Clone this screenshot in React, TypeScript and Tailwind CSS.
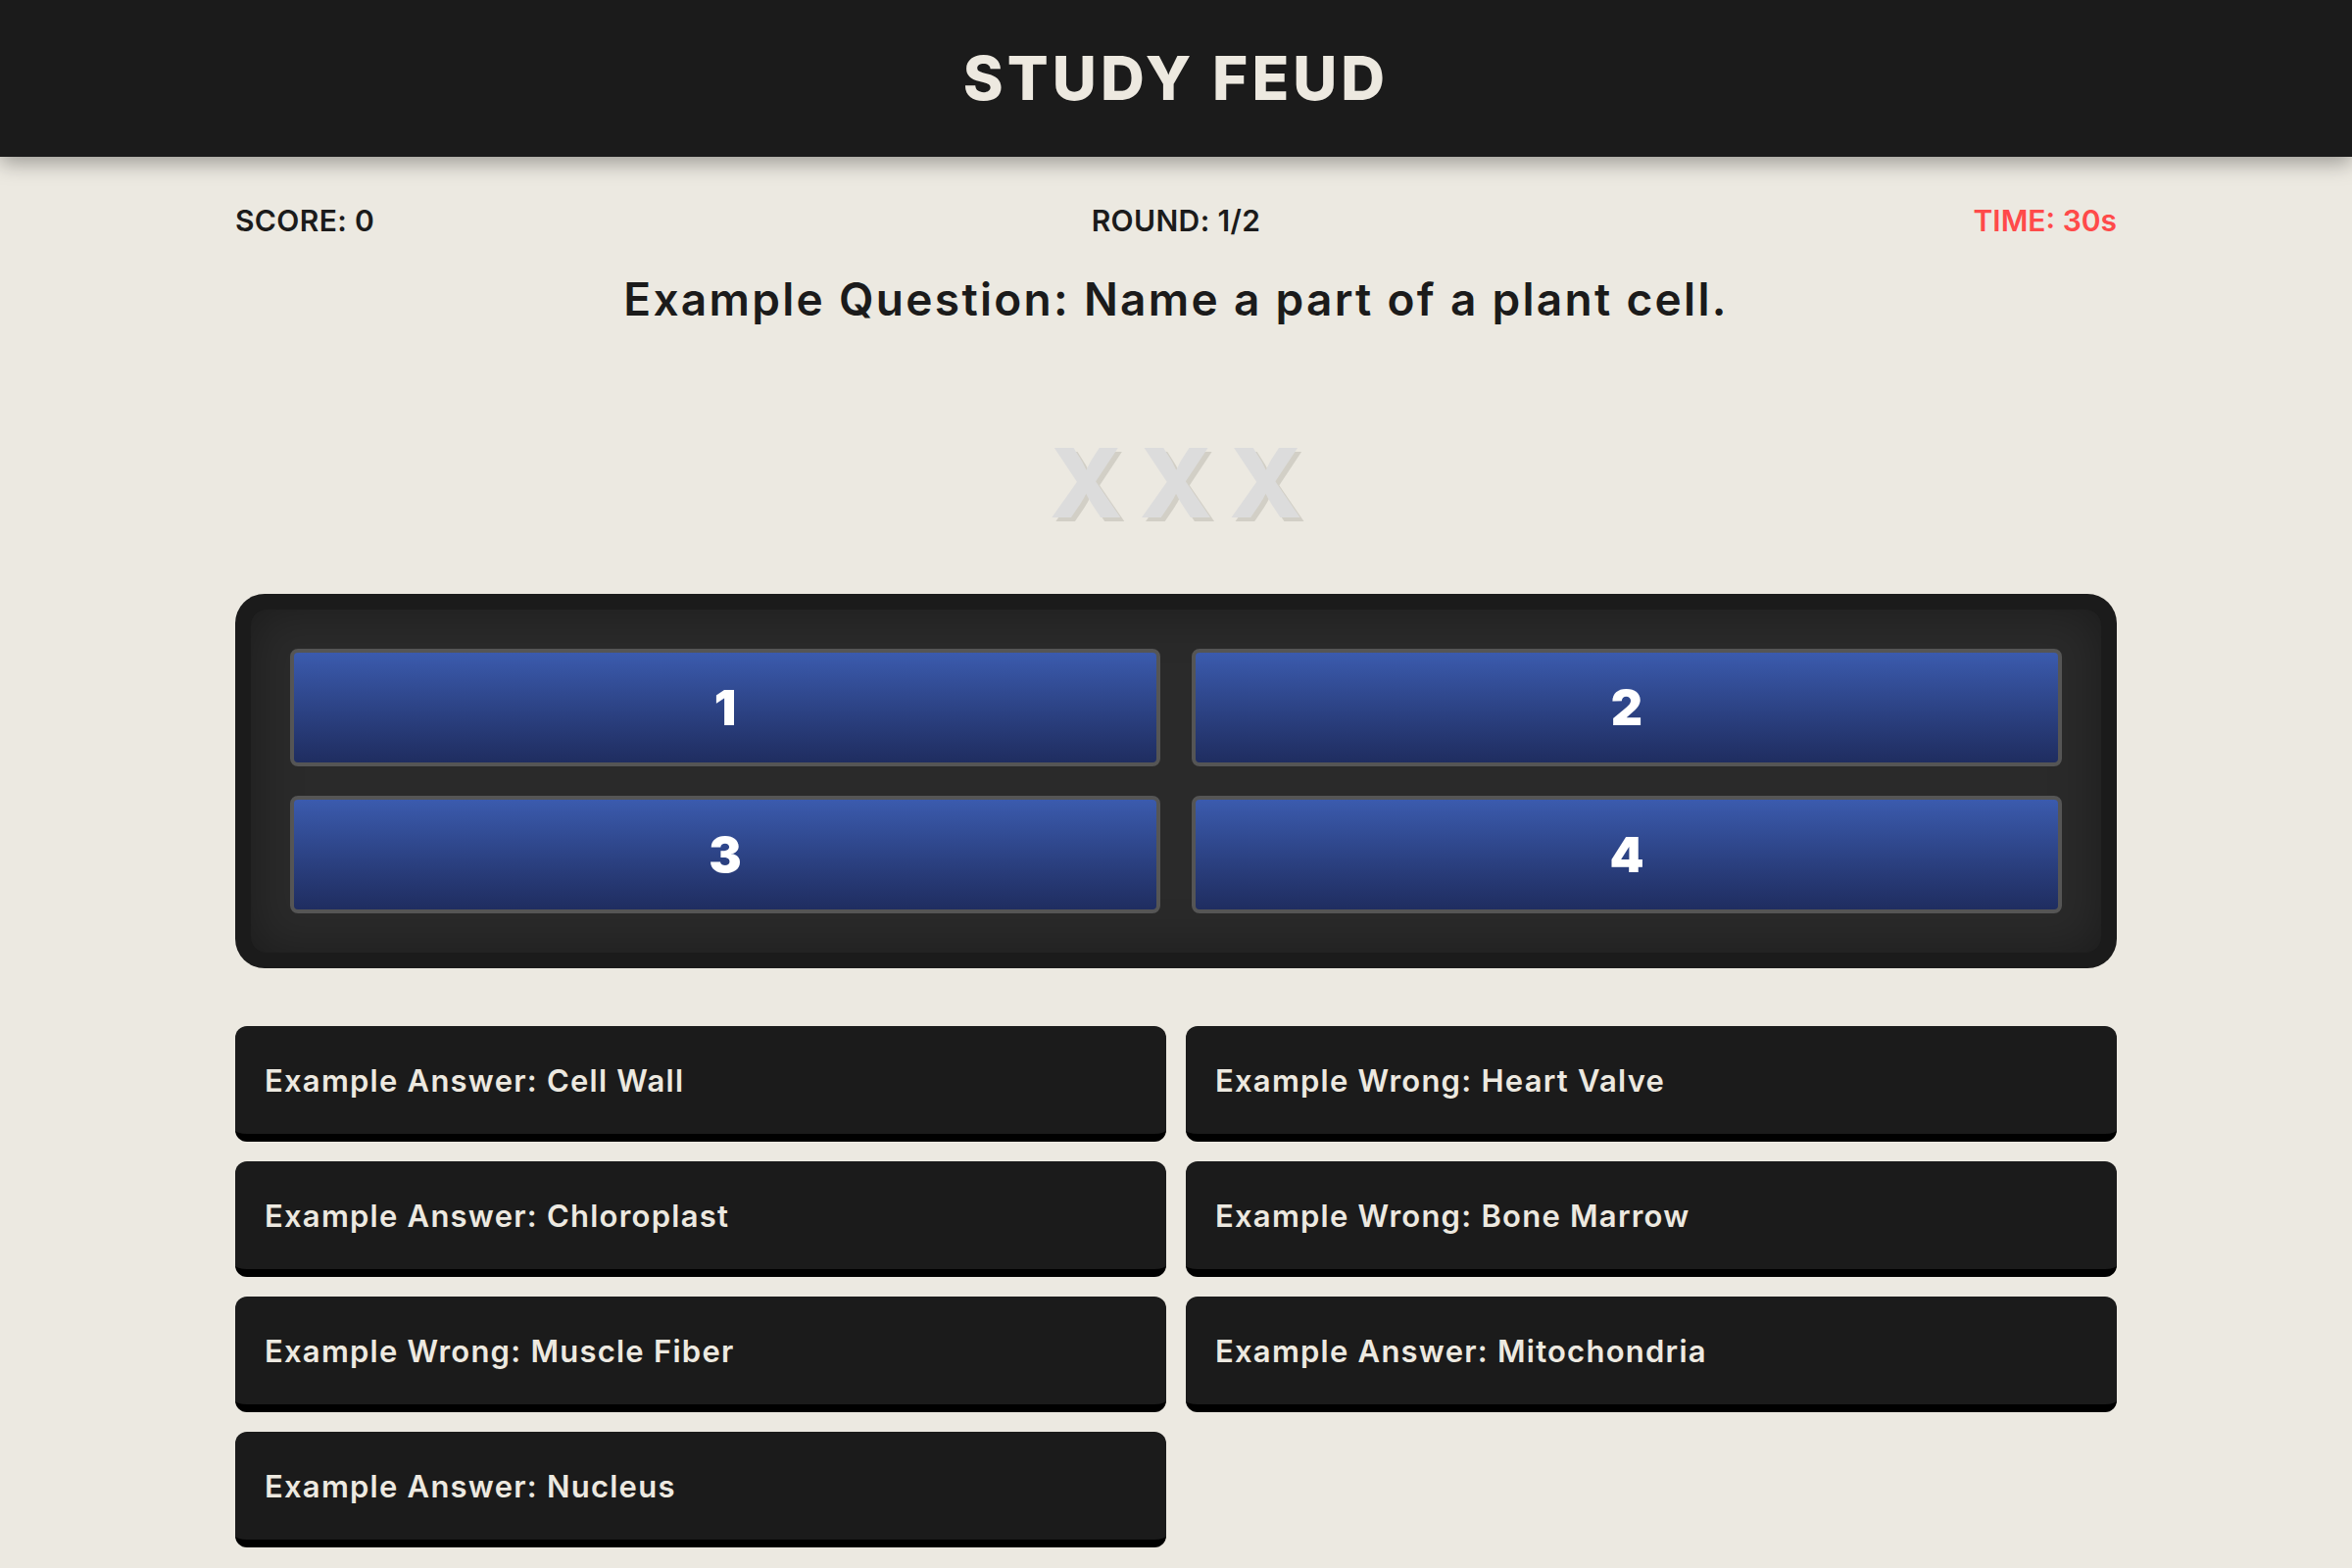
const answers = [
  'Example Answer: Cell Wall',
  'Example Wrong: Heart Valve',
  'Example Answer: Chloroplast',
  'Example Wrong: Bone Marrow',
  'Example Wrong: Muscle Fiber',
  'Example Answer: Mitochondria',
  'Example Answer: Nucleus'
]

const font = { fontFamily: 'Inter, "Noto Sans", sans-serif' }

function Tile({ n }: { n: number }) {
  return (
    <div className="h-[120px] rounded-[8px] border-4 border-[#555555] bg-linear-to-b from-[#3b5bae] to-[#1f2d60] flex items-center justify-center">
      <span className="text-[50px] leading-none font-black text-white">{n}</span>
    </div>
  )
}

export default function App() {
  return (
    <div className="min-h-screen bg-[#ece9e1] text-[#1b1b1b] pb-[40px]" style={font}>
      {/* Header */}
      <header className="h-[160px] bg-[#1b1b1b] flex items-center justify-center shadow-[0_6px_20px_rgba(0,0,0,0.35)] relative">
        <h1 className="text-[62px] leading-none font-extrabold tracking-[0.065em] text-[#ede9e0]">STUDY FEUD</h1>
      </header>

      <main className="mx-[240px]">
        {/* Stats */}
        <div className="mt-[50px] grid grid-cols-3 text-[30px] leading-none font-semibold tracking-[0.012em]">
          <span>SCORE: 0</span>
          <span className="text-center">ROUND: 1/2</span>
          <span className="text-right text-[#ff4a4a] tracking-normal">TIME: 30s</span>
        </div>

        {/* Question */}
        <h2 className="mt-[42px] text-center text-[46px] leading-none font-semibold tracking-[0.05em]">
          Example Question: Name a part of a plant cell.
        </h2>

        {/* Strikes */}
        <div className="mt-[116px] flex justify-center gap-[17px] text-[98px] leading-none font-extrabold text-[#dcdcdc] [text-shadow:4px_4px_0_#d2cfc6]">
          <span>X</span>
          <span>X</span>
          <span>X</span>
        </div>

        {/* Board */}
        <div className="mt-[64px] rounded-[30px] bg-[#1b1b1b] p-4">
          <div className="rounded-[16px] bg-[#2a2a2a] shadow-[inset_0_0_50px_rgba(0,0,0,0.35)] p-[40px] grid grid-cols-2 gap-x-[32px] gap-y-[30px]">
            <Tile n={1} />
            <Tile n={2} />
            <Tile n={3} />
            <Tile n={4} />
          </div>
        </div>

        {/* Answers */}
        <div className="mt-[59px] grid grid-cols-2 gap-[20px]">
          {answers.map((a) => (
            <div
              key={a}
              className="h-[118px] rounded-[12px] bg-[#1b1b1b] border-b-8 border-black flex items-center px-[30px]"
            >
              <span className="text-[31px] leading-none font-semibold tracking-[0.04em] text-[#ede9e0]">{a}</span>
            </div>
          ))}
        </div>
      </main>
    </div>
  )
}
